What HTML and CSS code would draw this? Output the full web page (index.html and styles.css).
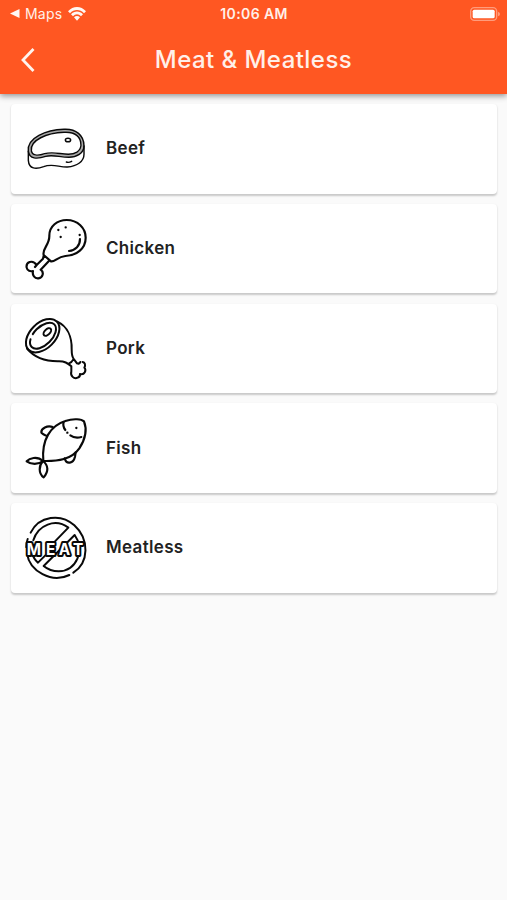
FILE: index.html
```html
<!DOCTYPE html>
<html lang="en">
<head>
<meta charset="utf-8">
<meta name="viewport" content="width=device-width, initial-scale=1">
<title>Meat &amp; Meatless</title>
<link rel="stylesheet" href="styles.css">
</head>
<body>
<header class="header">
  <div class="status">
    <div class="status-left">
      <svg class="return" viewBox="0 0 10 9"><path d="M0 4.5 9.5 0V9Z"/></svg>
      <span class="maps">Maps</span>
      <svg class="wifi" viewBox="0 0 54 42"><path d="M0 13C15-4 39-4 54 13L48 19C36 6 18 6 6 19ZM9 22C19 11 35 11 45 22L39 28C32 20 22 20 15 28ZM18 31C23 26 31 26 36 31L27 41Z"/></svg>
    </div>
    <span class="time">10:06 AM</span>
    <svg class="battery" viewBox="0 0 90 42"><rect class="shell" x="2" y="2" width="78" height="38" rx="11"/><rect class="charge" x="8" y="8" width="66" height="26" rx="5"/><path class="tip" d="M84 14q6 2 6 7t-6 7Z"/></svg>
  </div>
  <div class="toolbar">
    <svg class="back" viewBox="0 0 14 24"><path d="M12.500 1 2 12l10.500 11"/></svg>
    <h1 class="title">Meat &amp; Meatless</h1>
  </div>
</header>
<main class="list">
  <article class="card">
    <svg class="icon thin" viewBox="0 0 240 225">
      <path class="rim" d="M44 120C40 84 95 61 147 59C182 57 203 75 203 104C203 125 182 135 161 135C134 136 115 126 91 133C67 141 47 139 44 120Z"/>
      <path d="M40 121C35 80 94 57 147 55C183 53 207 73 207 105C207 127 184 139 162 139C134 139 115 130 92 136C66 145 43 144 40 121Z"/>
      <path d="M49 119C45 87 95 66 147 64C181 62 198 77 198 103C197 121 180 130 160 130C133 129 114 121 89 128C66 136 51 133 49 119Z"/>
      <path d="M40 121v27C42 175 63 175 86 167C112 156 132 169 157 168C187 166 207 151 207 130V105M154 153q7 3 16-2"/>
      <ellipse cx="159" cy="87" rx="8" ry="5.500"/>
    </svg>
    <h2 class="label">Beef</h2>
  </article>
  <article class="card">
    <svg class="icon" viewBox="0 0 240 225">
      <path d="M86 132C81 113 103 103 103 76C102 45 128 27 155 27C188 27 212 51 212 80C212 113 184 134 151 135C127 137 119 154 108 151ZM86 134 84 143 65 162C52 144 32 154 35 170C37 180 46 182 54 180C51 193 59 203 70 202C84 200 88 184 77 176L101 151M65 162l-5 6"/>
      <path d="M195 84C195 104 182 118 162 120"/>
      <path class="dots" d="M130 57h.1M152 49h.1M137 78h.1M194 72h.1"/>
    </svg>
    <h2 class="label">Chicken</h2>
  </article>
  <article class="card">
    <svg class="icon medium" viewBox="0 0 240 225">
      <ellipse cx="83" cy="74" rx="60" ry="38" transform="rotate(-45 83 74)"/>
      <ellipse class="gap" cx="84" cy="74" rx="48" ry="27" pathLength="100" transform="rotate(-45 84 74)"/>
      <ellipse cx="97" cy="63" rx="14" ry="8" transform="rotate(-45 97 63)"/>
      <path d="M127 32C157 46 171 78 170 115C170 129 173 141 177 145L186 157Q193 160 196 153M36 113C55 136 88 151 128 151C149 150 158 156 169 166V181C165 195 177 205 188 200C196 197 195 189 195 189C209 193 215 177 208 170C213 161 209 154 203 153M161 158q9-3 14-13"/>
    </svg>
    <h2 class="label">Pork</h2>
  </article>
  <article class="card">
    <svg class="icon" viewBox="0 0 240 225">
      <path d="M85 150C79 87 106 44 151 30C177 21 200 25 207 31C217 56 211 84 193 112C169 146 129 151 85 150Z"/>
      <path d="M113 48C97 42 78 52 79 64C79 69 89 71 96 75M149 142C154 162 175 158 180 137L182 124"/>
      <path d="M146 33C143 43 145 49 151 57M166 73Q179 83 199 78"/>
      <path d="M84 150C66 134 43 142 35 151C49 161 69 162 84 150ZM84 150C71 164 70 187 86 199C101 181 101 164 84 150Z"/>
      <path class="dots" d="M184 51h.1M157 65h.1"/>
    </svg>
    <h2 class="label">Fish</h2>
  </article>
  <article class="card">
    <svg class="icon medium" viewBox="0 0 240 225">
      <path d="M47 68C72 17 138 9 178 46C224 88 222 158 175 188M163 195C110 221 44 184 36 131M34 112Q34 97 38 87"/>
      <path d="M160 53C121 24 69 45 55 91M160 53 120 94M86 168 179 75C211 120 185 182 131 184Q105 184 86 168M51 128Q55 145 69 158L91 136"/>
      <text class="meat"><tspan x="35" y="134">M</tspan><tspan x="93">E</tspan><tspan x="131">A</tspan><tspan x="174">T</tspan></text>
    </svg>
    <h2 class="label">Meatless</h2>
  </article>
</main>
</body>
</html>
```
FILE: styles.css
```css
* { box-sizing: border-box; }
body {
  margin: 0;
  min-height: 100vh;
  background: #fafafa;
  color: #222;
  font-family: Inter, "Liberation Sans", sans-serif;
}
.header {
  position: relative;
  height: 94px;
  background: #ff5722;
  color: #fff0e9;
  box-shadow: 0 2px 6px rgba(0, 0, 0, .42);
}
.status {
  display: grid;
  grid-template-columns: 1fr auto 1fr;
  align-items: center;
  height: 27px;
  padding: 0 7px 0 10px;
}
.status-left { display: flex; align-items: center; }
.return { width: 10px; height: 9px; fill: #fff8f4; }
.maps { margin-left: 5px; font-size: 14px; letter-spacing: .2px; }
.wifi { width: 18px; height: 14px; margin-left: 6px; fill: #fff8f4; }
.time { margin-right: 2px; font-size: 14px; font-weight: 600; letter-spacing: .4px; }
.battery { justify-self: end; width: 30px; height: 14px; }
.shell { fill: none; stroke: #ff9c7c; stroke-width: 4; }
.charge { fill: #fff; }
.tip { fill: #ff9c7c; }
.toolbar {
  display: grid;
  grid-template-columns: 50px 1fr 50px;
  align-items: center;
  height: 65px;
}
.back { width: 14px; height: 24px; margin-left: 21px; fill: none; stroke: #fff4ee; stroke-width: 2.800; }
.title { margin: 0; text-align: center; font-size: 24px; font-weight: 450; letter-spacing: .45px; }
.list {
  display: flex;
  flex-direction: column;
  gap: 10.300px;
  padding: 10px 10px 0 11px;
}
.card {
  display: flex;
  align-items: center;
  height: 89.500px;
  padding-left: 4px;
  border-radius: 4px;
  background: #fff;
  box-shadow: 0 1.500px 2px rgba(0, 0, 0, .2);
}
.icon {
  flex: none;
  width: 80px;
  height: 75px;
  fill: none;
  stroke: #090909;
  stroke-width: 6.500;
  stroke-linecap: round;
  stroke-linejoin: round;
}
.medium { stroke-width: 6; }
.thin { stroke-width: 4.300; }
.rim { stroke: #aaa; stroke-width: 7; }
.gap { stroke-dasharray: 60 7 33 0; }
.dots { stroke-width: 7; }
.meat {
  font: 700 46px Inter, sans-serif;
  fill: #fff;
  stroke-width: 12;
  paint-order: stroke;
}
.label { margin: 0 0 1px 11px; font-size: 17px; font-weight: 600; letter-spacing: .33px; }
```
